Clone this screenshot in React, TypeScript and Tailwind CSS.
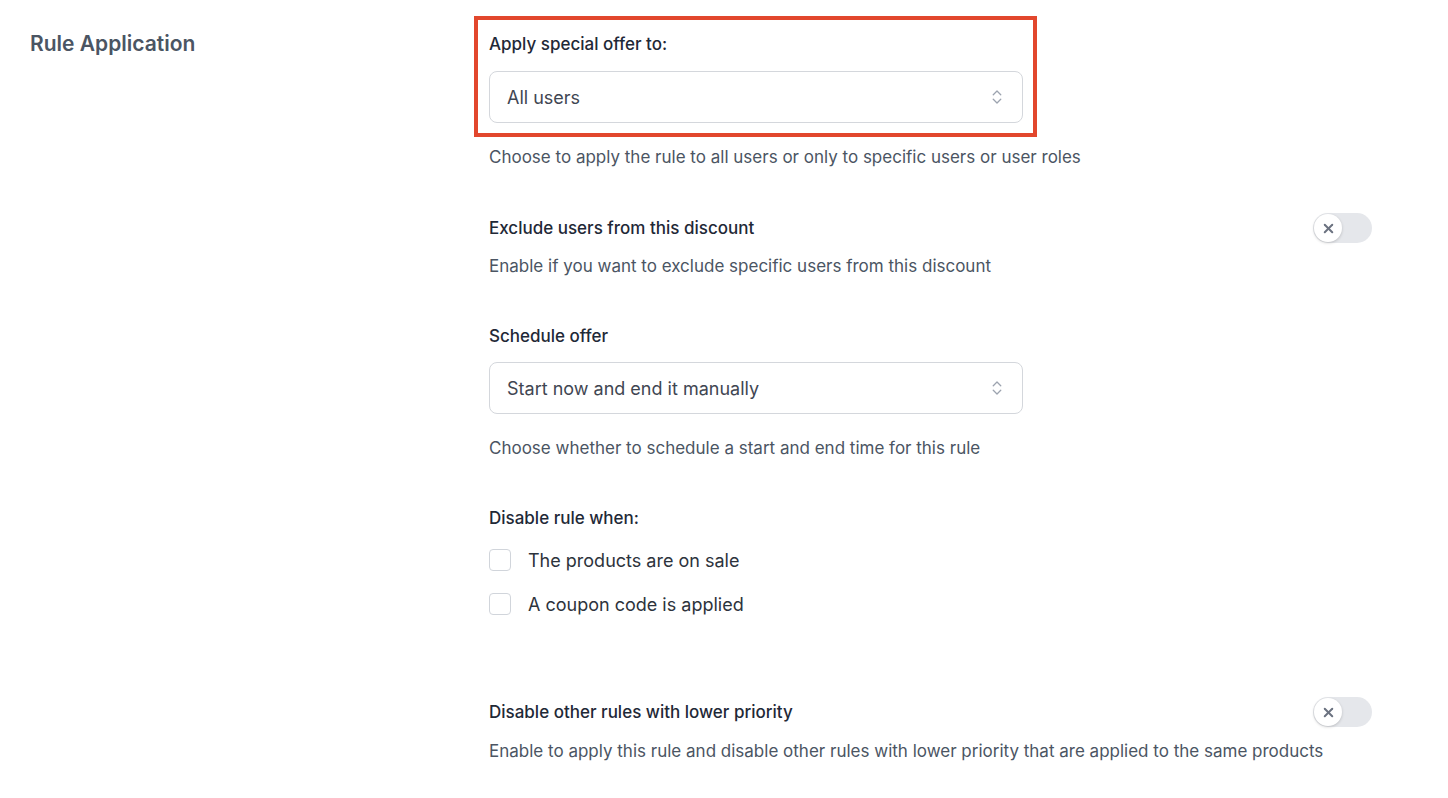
import { ChevronsUpDown, X } from "lucide-react";

function Toggle() {
  return (
    <button
      type="button"
      className="relative inline-flex h-[30px] w-[59px] shrink-0 items-center rounded-full bg-[#e5e7eb]"
    >
      <span className="flex h-[28px] w-[28px] items-center justify-center rounded-full bg-white shadow-[0_1px_3px_rgba(0,0,0,0.18)] ml-px">
        <X className="h-[15px] w-[15px] text-[#6b7280]" strokeWidth={3.25} />
      </span>
    </button>
  );
}

function Select({ value }: { value: string }) {
  return (
    <div className="flex h-[52px] w-[534px] items-center justify-between rounded-lg border border-[#d4d7dc] bg-white pl-[17px] pr-[16px]">
      <span className="text-[18px] text-[#3f4652]">{value}</span>
      <ChevronsUpDown className="h-[18px] w-[18px] text-[#9ca3af]" strokeWidth={1.75} />
    </div>
  );
}

function Checkbox({ label }: { label: string }) {
  return (
    <label className="flex h-[28px] items-center gap-[17px]">
      <span className="h-[22px] w-[22px] rounded border border-[#d1d5db] bg-white" />
      <span className="text-[18px] text-[#2d333c]">{label}</span>
    </label>
  );
}

export default function App() {
  return (
    <div
      className="min-h-screen bg-white text-[#1f2937]"
      style={{ fontFamily: "Inter, 'Noto Sans', sans-serif" }}
    >
      <div className="flex pl-[30px] pt-[32px]">
        <div className="w-[459px] shrink-0">
          <h2 className="text-[21px] leading-[24px] font-semibold text-[#4b5563]">Rule Application</h2>
        </div>

        <div className="w-[883px] pb-10">
          <div className="-mt-[16px] -ml-[15px] w-[563px] border-4 border-[#e2472d] px-[11px] pt-3 pb-[10px]">
            <div className="text-[17px] leading-[24px] font-medium text-[#1f2937]">Apply special offer to:</div>
            <div className="mt-[15px]">
              <Select value="All users" />
            </div>
          </div>
          <p className="mt-2 text-[17px] leading-[24px] text-[#4b5563]">
            Choose to apply the rule to all users or only to specific users or user roles
          </p>

          <div className="mt-[44px] flex items-center justify-between">
            <div className="text-[17px] leading-[24px] font-medium">Exclude users from this discount</div>
            <Toggle />
          </div>
          <p className="mt-[11px] text-[17px] leading-[24px] text-[#4b5563]">
            Enable if you want to exclude specific users from this discount
          </p>

          <div className="mt-[46px] text-[17px] leading-[24px] font-medium">Schedule offer</div>
          <div className="mt-[14px]">
            <Select value="Start now and end it manually" />
          </div>
          <p className="mt-[22px] text-[17px] leading-[24px] text-[#4b5563]">
            Choose whether to schedule a start and end time for this rule
          </p>

          <div className="mt-[46px] text-[17px] leading-[24px] font-medium">Disable rule when:</div>
          <div className="mt-[16px] flex flex-col gap-[16px]">
            <Checkbox label="The products are on sale" />
            <Checkbox label="A coupon code is applied" />
          </div>

          <div className="mt-[79px] flex items-center justify-between">
            <div className="text-[17px] leading-[24px] font-medium">Disable other rules with lower priority</div>
            <Toggle />
          </div>
          <p className="mt-[12px] text-[17px] leading-[24px] text-[#4b5563]">
            Enable to apply this rule and disable other rules with lower priority that are applied to the same products
          </p>
        </div>
      </div>
    </div>
  );
}
